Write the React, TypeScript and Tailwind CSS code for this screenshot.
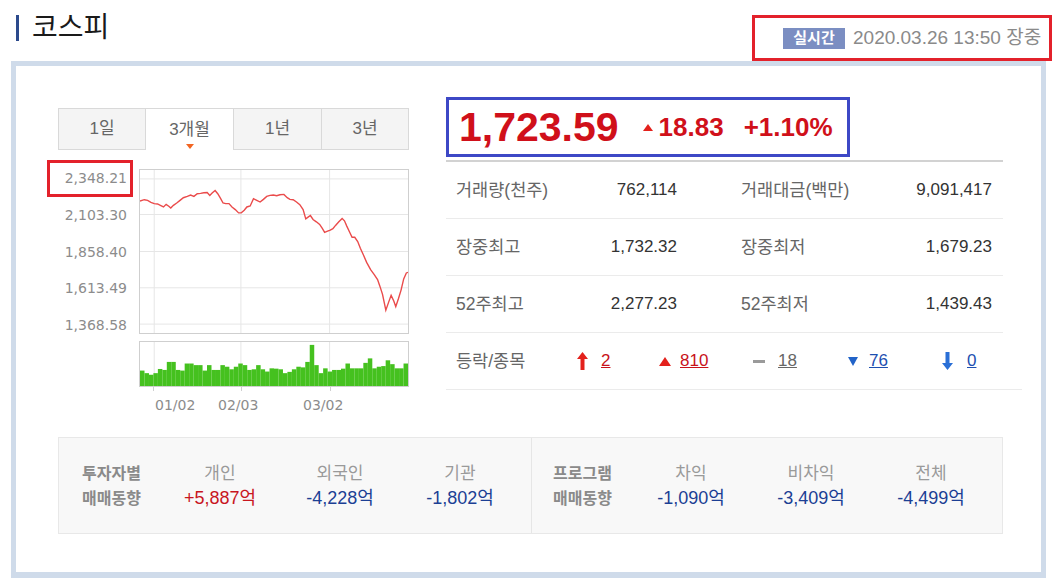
import React from "react";

const linePts: [number, number][] = [
  [297, 122], [310, 118], [320, 120], [330, 126], [340, 130], [350, 131], [360, 136], [368, 140],
  [376, 132], [384, 138], [390, 143], [398, 135], [408, 128], [418, 120], [428, 112], [440, 108],
  [450, 104], [460, 108], [470, 100], [480, 99], [490, 97], [500, 96], [508, 105], [515, 98],
  [524, 90], [532, 100], [540, 113], [548, 128], [556, 130], [566, 130], [575, 140], [585, 148],
  [595, 158], [603, 158], [612, 150], [620, 140], [630, 137], [640, 115], [650, 120], [660, 125],
  [670, 117], [680, 108], [690, 105], [700, 104], [710, 106], [720, 103], [732, 102], [742, 112],
  [750, 117], [760, 118], [770, 125], [780, 133], [790, 148], [798, 176], [806, 170], [812, 166],
  [820, 178], [830, 185], [840, 193], [848, 205], [855, 217], [862, 214], [872, 210], [880, 206],
  [888, 196], [898, 185], [908, 175], [915, 182], [922, 198], [930, 215], [938, 232], [946, 232],
  [955, 245], [963, 265], [972, 285], [982, 308], [994, 330], [1005, 345], [1015, 360], [1022, 380],
  [1030, 405], [1040, 453], [1048, 430], [1056, 408], [1064, 425], [1070, 442], [1078, 418],
  [1086, 392], [1094, 358], [1102, 340], [1107, 338],
];

const volTops = [
  632, 640, 645, 640, 627, 630, 605, 605, 630, 632, 610, 610, 615, 615, 632, 615, 630, 630, 615, 620,
  628, 620, 610, 615, 630, 628, 615, 628, 635, 625, 626, 628, 640, 636, 628, 620, 622, 605, 552, 615,
  640, 625, 635, 630, 630, 626, 610, 625, 625, 625, 608, 594, 625, 620, 618, 600, 612, 625, 625, 610,
];

const rows = [
  { l1: "거래량(천주)", v1: "762,114", l2: "거래대금(백만)", v2: "9,091,417" },
  { l1: "장중최고", v1: "1,732.32", l2: "장중최저", v2: "1,679.23" },
  { l1: "52주최고", v1: "2,277.23", l2: "52주최저", v2: "1,439.43" },
];

function ArrowUp() {
  return (
    <svg width="11" height="18" viewBox="0 0 11 18">
      <path d="M5.5 0 L11 7 L7.5 7 L7.5 18 L3.5 18 L3.5 7 L0 7 Z" fill="#e3211c" />
    </svg>
  );
}

function ArrowDown() {
  return (
    <svg width="11" height="18" viewBox="0 0 11 18">
      <path d="M3.5 0 L7.5 0 L7.5 11 L11 11 L5.5 18 L0 11 L3.5 11 Z" fill="#2a6fd6" />
    </svg>
  );
}

function Investor({ title, cols }: { title: [string, string]; cols: { k: string; v: string; c: string }[] }) {
  return (
    <div className="flex h-full items-center">
      <div className="w-[78px] text-[16px] font-bold leading-[25px] text-[#8a8a8a]">
        <div>{title[0]}</div>
        <div>{title[1]}</div>
      </div>
      {cols.map(col => (
        <div key={col.k} className="w-[120px] text-center leading-[25px]">
          <div className="text-[17px] text-[#9a9a9a]">{col.k}</div>
          <div className={`text-[18px] ${col.c}`}>{col.v}</div>
        </div>
      ))}
    </div>
  );
}

export default function App() {
  const path = linePts.map((p, i) => `${i ? "L" : "M"}${p[0]} ${p[1]}`).join(" ");

  return (
    <div className="h-[586px] w-[1055px] overflow-hidden bg-white font-['Liberation_Sans','Noto_Sans_CJK_KR',sans-serif] text-[#333]">
      {/* header */}
      <div className="flex h-[61px] items-start justify-between pl-[16px] pr-[3px] pt-[15px]">
        <div className="flex h-[26px] items-center">
          <span className="h-[26px] w-[3px] bg-[#2c4a8c]" />
          <span className="ml-[13px] text-[28px] leading-[26px] text-[#1a1a1a]">코스피</span>
        </div>
        <div className="flex h-[46px] w-[300px] items-center border-[3px] border-[#e3212b] pl-[28px]">
          <span className="flex h-[21px] w-[62px] items-center justify-center bg-[#7b8ec2] text-[15px] font-bold text-white">
            실시간
          </span>
          <span className="ml-[8px] text-[19px] text-[#8a8a8a]">2020.03.26 13:50 장중</span>
        </div>
      </div>

      {/* main box */}
      <div className="ml-[11px] h-[517px] w-[1035px] border-[5px] border-b-[6px] border-[#cfdbea] pl-[42px] pt-[31px]">
        <div className="flex items-start">
          {/* chart column */}
          <div className="mt-[11px] w-[351px]">
            <div className="grid h-[42px] grid-cols-[88px_87px_89px_87px] text-[17px] text-[#666]">
              <div className="flex items-center justify-center border border-[#d9d9d9] bg-[#f4f4f4]">1일</div>
              <div className="relative flex items-center justify-center border-t border-[#d9d9d9] bg-white">
                3개월
                <span className="absolute bottom-[1px] left-[40px] h-0 w-0 border-x-[4px] border-t-[5px] border-x-transparent border-t-[#f26522]" />
              </div>
              <div className="flex items-center justify-center border border-[#d9d9d9] bg-[#f4f4f4]">1년</div>
              <div className="flex items-center justify-center border border-l-0 border-[#d9d9d9] bg-[#f4f4f4]">3년</div>
            </div>

            <div className="mt-[19px] flex">
              <div className="relative flex h-[165px] w-[81px] flex-col justify-between pr-[12px] text-right font-['DejaVu_Sans',sans-serif] text-[14px] leading-[18px] text-[#8c8c8c]">
                <span>2,348.21</span>
                <span>2,103.30</span>
                <span>1,858.40</span>
                <span>1,613.49</span>
                <span>1,368.58</span>
                <span className="absolute left-[-11px] top-[-9px] h-[37px] w-[86px] border-[3px] border-[#e3212b]" />
              </div>
              <div className="h-[165px] w-[270px] border border-[#cfcfcf]">
                <svg width="268" height="163" viewBox="297 28 810 494" preserveAspectRatio="none" className="block">
                  {[55, 163, 275, 385, 495].map(y => (
                    <line key={y} x1="297" x2="1107" y1={y} y2={y} stroke="#e6e6e6" strokeWidth="1" vectorEffect="non-scaling-stroke" />
                  ))}
                  {[340, 602, 870].map(x => (
                    <line key={x} x1={x} x2={x} y1="28" y2="522" stroke="#e6e6e6" strokeWidth="1" vectorEffect="non-scaling-stroke" />
                  ))}
                  <path d={path} fill="none" stroke="#ea4b4b" strokeWidth="1.4" vectorEffect="non-scaling-stroke" />
                </svg>
              </div>
            </div>

            <div className="ml-[81px] mt-[7px] h-[46px] w-[270px] border border-[#cfcfcf]">
              <svg width="268" height="44" viewBox="297 543 810 137" preserveAspectRatio="none" className="block">
                {[340, 602, 870].map(x => (
                  <line key={x} x1={x} x2={x} y1="543" y2="680" stroke="#e6e6e6" strokeWidth="1" vectorEffect="non-scaling-stroke" />
                ))}
                {volTops.map((t, i) => (
                  <rect key={i} x={297 + i * 13.5} y={t} width="13.6" height={680 - t} fill="#45c11f" />
                ))}
              </svg>
            </div>

            <div className="relative ml-[81px] h-[27px] w-[270px] font-['DejaVu_Sans',sans-serif] text-[14px] leading-[14px] text-[#8c8c8c]">
              <span className="absolute left-[14px] top-0 h-[4px] w-px bg-[#cfcfcf]" />
              <span className="absolute left-[102px] top-0 h-[4px] w-px bg-[#cfcfcf]" />
              <span className="absolute left-[191px] top-0 h-[4px] w-px bg-[#cfcfcf]" />
              <span className="absolute left-[16px] top-[11px]">01/02</span>
              <span className="absolute left-[79px] top-[11px]">02/03</span>
              <span className="absolute left-[164px] top-[11px]">03/02</span>
            </div>
          </div>

          {/* quote column */}
          <div className="ml-[37px] w-[576px]">
            <div className="flex h-[60px] w-[404px] items-center border-[3px] border-[#3d48c6] pl-[10px] font-bold text-[#d0101a]">
              <span className="text-[41px] leading-none">1,723.59</span>
              <span className="ml-[24px] h-0 w-0 border-x-[5px] border-b-[7px] border-x-transparent border-b-[#e3211c]" />
              <span className="ml-[6px] text-[26px] leading-none">18.83</span>
              <span className="ml-[20px] text-[26px] leading-none">+1.10%</span>
            </div>

            <div className="mt-[3px] w-[557px] border-t-2 border-[#d2d2d2]">
              {rows.map(r => (
                <div key={r.l1} className="flex h-[57px] items-center border-b border-[#ebebeb] pl-[10px] text-[17px]">
                  <span className="w-[130px] text-[17.5px] text-[#666]">{r.l1}</span>
                  <span className="w-[91px] text-right text-[#333]">{r.v1}</span>
                  <span className="ml-[64px] w-[140px] text-[17.5px] text-[#666]">{r.l2}</span>
                  <span className="w-[111px] text-right text-[#333]">{r.v2}</span>
                </div>
              ))}
            </div>
            <div className="flex h-[57px] w-[576px] items-center border-b border-[#ebebeb] pl-[10px] text-[17px]">
              <span className="w-[121px] text-[17.5px] text-[#666]">등락/종목</span>
              <span className="flex w-[80px] items-center">
                <span className="flex w-[24px]"><ArrowUp /></span>
                <span className="text-[#c8121a] underline">2</span>
              </span>
              <span className="flex w-[96px] items-center">
                <span className="flex w-[23px] pl-[2px]">
                  <span className="h-0 w-0 border-x-[6px] border-b-[9px] border-x-transparent border-b-[#e3211c]" />
                </span>
                <span className="text-[#c8121a] underline">810</span>
              </span>
              <span className="flex w-[95px] items-center">
                <span className="flex w-[25px]">
                  <span className="h-[3px] w-[12px] bg-[#9a9a9a]" />
                </span>
                <span className="text-[#666] underline">18</span>
              </span>
              <span className="flex w-[94px] items-center">
                <span className="flex w-[21px]">
                  <span className="h-0 w-0 border-x-[5px] border-t-[9px] border-x-transparent border-t-[#2163c8]" />
                </span>
                <span className="text-[#1d4fb0] underline">76</span>
              </span>
              <span className="flex items-center">
                <span className="flex w-[25px]"><ArrowDown /></span>
                <span className="text-[#1d4fb0] underline">0</span>
              </span>
            </div>
          </div>
        </div>

        {/* investor panel */}
        <div className="mt-[23px] flex h-[97px] w-[945px] border border-[#e8e8e8] bg-[#f8f8f8]">
          <div className="w-[473px] border-r border-[#e6e6e6] pl-[23px]">
            <Investor
              title={["투자자별", "매매동향"]}
              cols={[
                { k: "개인", v: "+5,887억", c: "text-[#c8161e]" },
                { k: "외국인", v: "-4,228억", c: "text-[#1c3f94]" },
                { k: "기관", v: "-1,802억", c: "text-[#1c3f94]" },
              ]}
            />
          </div>
          <div className="pl-[21px]">
            <Investor
              title={["프로그램", "매매동향"]}
              cols={[
                { k: "차익", v: "-1,090억", c: "text-[#1c3f94]" },
                { k: "비차익", v: "-3,409억", c: "text-[#1c3f94]" },
                { k: "전체", v: "-4,499억", c: "text-[#1c3f94]" },
              ]}
            />
          </div>
        </div>
      </div>
    </div>
  );
}
